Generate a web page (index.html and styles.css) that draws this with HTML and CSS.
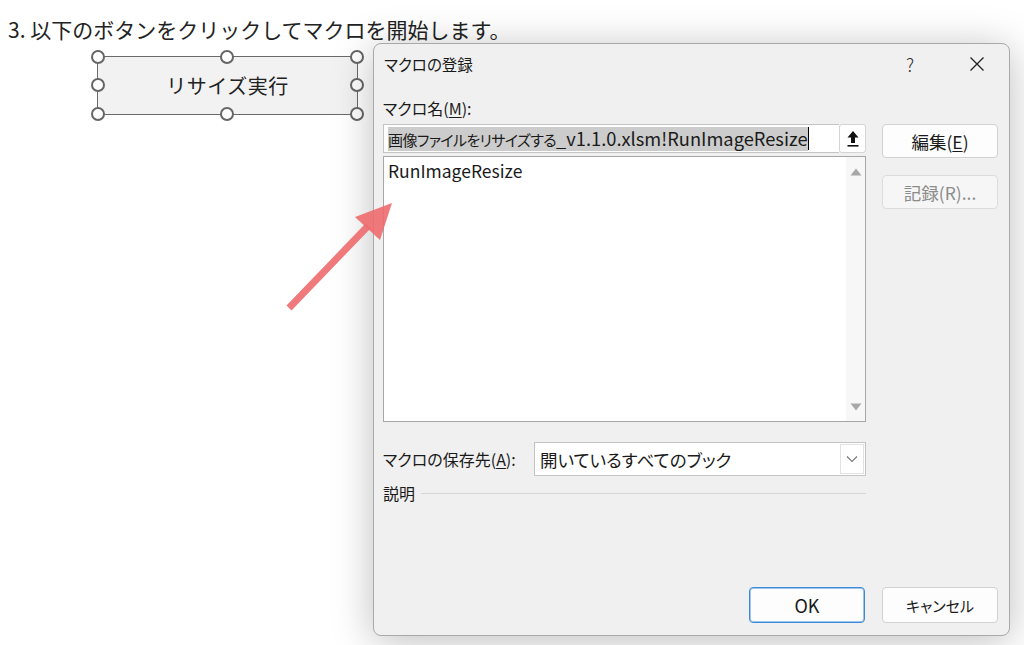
FILE: index.html
```html
<!DOCTYPE html>
<html lang="ja">

<head>
    <meta charset="UTF-8">
    <meta name="viewport" content="width=device-width, initial-scale=1.0">
    <title>マクロの登録</title>
    <link rel="stylesheet" href="styles.css">
</head>

<body>

    <div class="sheet">
        <p class="step">3. 以下のボタンをクリックしてマクロを開始します。</p>

        <!-- 選択中のフォームボタン -->
        <div class="shape">
            <span class="shape-label">リサイズ実行</span>
            <i class="handle h-tl"></i>
            <i class="handle h-tc"></i>
            <i class="handle h-tr"></i>
            <i class="handle h-ml"></i>
            <i class="handle h-mr"></i>
            <i class="handle h-bl"></i>
            <i class="handle h-bc"></i>
            <i class="handle h-br"></i>
        </div>
    </div>

    <div class="dialog">
        <div class="titlebar">
            <span class="title">マクロの登録</span>
            <span class="help">?</span>
            <span class="close">
                <svg width="16" height="16" viewBox="0 0 16 16">
                    <path d="M1.5 1.5 L14.5 14.5 M14.5 1.5 L1.5 14.5" stroke="#222" stroke-width="1.3" fill="none" />
                </svg>
            </span>
        </div>

        <div class="dialog-body">
            <div class="left-col">
                <div class="label">マクロ名(<u>M</u>):</div>

                <div class="name-row">
                    <div class="name-input">
                        <span class="selected"><span class="jp">画像ファイルをリサイズする</span>_v1.1.0.xlsm!RunImageResize</span><span class="caret"></span>
                    </div>
                    <div class="pick-btn">
                        <svg width="14" height="18" viewBox="0 0 14 18">
                            <path d="M7 1 L12.5 7.5 L9 7.5 L9 13 L5 13 L5 7.5 L1.5 7.5 Z" fill="#111" />
                            <rect x="1.5" y="15" width="11" height="1.6" fill="#111" />
                        </svg>
                    </div>
                </div>

                <div class="macro-list">
                    <div class="list-items">
                        <div class="list-item">RunImageResize</div>
                    </div>
                    <div class="scrollbar">
                        <svg width="12" height="8" viewBox="0 0 12 8"><path d="M6 0.5 L11.5 7.5 L0.5 7.5 Z" fill="#a8a8a8" /></svg>
                        <svg width="12" height="8" viewBox="0 0 12 8"><path d="M0.5 0.5 L11.5 0.5 L6 7.5 Z" fill="#a8a8a8" /></svg>
                    </div>
                </div>

                <div class="store-row">
                    <span class="label">マクロの保存先(<u>A</u>):</span>
                    <div class="select">
                        <span class="select-text">開いているすべてのブック</span>
                        <span class="select-btn">
                            <svg width="12" height="8" viewBox="0 0 12 8"><path d="M1 1.5 L6 6.5 L11 1.5" stroke="#777" stroke-width="1.1" fill="none" /></svg>
                        </span>
                    </div>
                </div>

                <div class="desc-row">
                    <span class="label">説明</span>
                    <span class="rule"></span>
                </div>
            </div>

            <div class="right-col">
                <div class="btn wide">編集(<u>E</u>)</div>
                <div class="btn wide disabled">記録(R)...</div>
            </div>
        </div>

        <div class="footer">
            <div class="btn default">OK</div>
            <div class="btn narrow">キャンセル</div>
        </div>
    </div>

    <svg class="pointer" width="1024" height="645" viewBox="0 0 1024 645">
        <line x1="289" y1="308" x2="368" y2="226" stroke="#ee6a6d" stroke-width="7" stroke-opacity="0.9" />
        <path d="M355 217 L392 203 L380 240 Z" fill="#ee6a6d" fill-opacity="0.9" />
    </svg>

</body>

</html>
```

FILE: styles.css
```css
body {
    margin: 0;
    padding: 0;
    background-color: #ffffff;
    font-family: "Noto Sans CJK JP", "Noto Sans", sans-serif;
    color: #1a1a1a;
    width: 1024px;
    height: 645px;
    overflow: hidden;
    position: relative;
}

.sheet {
    padding: 15px 0 0 8px;
}

.step {
    margin: 0;
    font-size: 21px;
    line-height: 29px;
    color: #222;
}

.shape {
    position: relative;
    margin: 12px 0 0 89px;
    width: 259px;
    height: 57px;
    border: 1.5px solid #6a6a6a;
    background-color: #f2f2f2;
    display: flex;
    align-items: center;
    justify-content: center;
}

.shape-label {
    font-size: 20px;
    color: #222;
    letter-spacing: 0.5px;
}

.handle {
    position: absolute;
    width: 10px;
    height: 10px;
    border: 2.2px solid #666;
    border-radius: 50%;
    background-color: #fff;
    margin: -7.2px 0 0 -7.2px;
}

.h-tl { left: 0; top: 0; }
.h-tc { left: 50%; top: 0; }
.h-tr { left: 100%; top: 0; }
.h-ml { left: 0; top: 50%; }
.h-mr { left: 100%; top: 50%; }
.h-bl { left: 0; top: 100%; }
.h-bc { left: 50%; top: 100%; }
.h-br { left: 100%; top: 100%; }

/* ダイアログ */
.dialog {
    position: absolute;
    left: 373px;
    top: 43px;
    width: 637px;
    height: 593px;
    box-sizing: border-box;
    border: 1px solid #a9a9a9;
    border-radius: 8px;
    background-color: #f0f0f0;
    box-shadow: 0 5px 40px rgba(0, 0, 0, 0.26);
    display: flex;
    flex-direction: column;
    font-size: 16px;
    font-feature-settings: "palt";
}

.titlebar {
    height: 40px;
    display: flex;
    align-items: center;
    padding-left: 10px;
}

.title {
    flex: 1;
    font-size: 15.5px;
    color: #1a1a1a;
}

.help {
    font-size: 18px;
    font-weight: 300;
    color: #333;
    width: 20px;
    margin-right: 43px;
}

.close {
    display: flex;
    margin-right: 24px;
}

.dialog-body {
    display: grid;
    grid-template-columns: 483px 116px;
    column-gap: 16px;
    padding: 14px 0 0 9px;
}

.left-col {
    display: flex;
    flex-direction: column;
}

.label {
    line-height: 20px;
    height: 20px;
    white-space: nowrap;
}

u {
    text-underline-offset: 2px;
}

.name-row {
    display: flex;
    margin-top: 6px;
    height: 29px;
}

.name-input {
    flex: 1;
    background-color: #fff;
    border: 1px solid #c4c4c4;
    border-right: none;
    display: flex;
    align-items: center;
    padding-left: 4px;
    overflow: hidden;
    white-space: nowrap;
}

.selected {
    background-color: #cccccc;
    font-size: 18.3px;
    line-height: 23px;
}

.jp {
    font-size: 15px;
    letter-spacing: -0.6px;
}

.caret {
    width: 1px;
    height: 23px;
    background-color: #000;
}

.pick-btn {
    width: 25px;
    background-color: #fff;
    border: 1px solid #d4d4d4;
    border-radius: 3px;
    display: flex;
    align-items: center;
    justify-content: center;
}

.macro-list {
    margin-top: 3px;
    height: 266px;
    box-sizing: border-box;
    border: 1px solid #a6a6a6;
    background-color: #fff;
    display: flex;
}

.list-items {
    flex: 1;
    padding: 2px 0 0 4px;
}

.list-item {
    font-size: 17.5px;
    line-height: 23px;
}

.scrollbar {
    width: 19px;
    background-color: #f7f7f7;
    display: flex;
    flex-direction: column;
    justify-content: space-between;
    align-items: center;
    padding: 11px 0 10px;
}

.store-row {
    margin-top: 20px;
    display: flex;
    align-items: center;
}

.store-row .label {
    flex: 1;
}

.select {
    width: 332px;
    height: 34px;
    box-sizing: border-box;
    border: 1px solid #c4c4c4;
    background-color: #fff;
    display: flex;
    align-items: center;
}

.select-text {
    flex: 1;
    padding-left: 5px;
    font-size: 17.5px;
}

.select-btn {
    width: 24px;
    height: 30px;
    margin-right: 1px;
    border: 1px solid #e2e2e2;
    box-sizing: border-box;
    display: flex;
    align-items: center;
    justify-content: center;
}

.desc-row {
    margin-top: 7px;
    display: flex;
    align-items: center;
    gap: 6px;
}

.rule {
    flex: 1;
    height: 1px;
    background-color: #d6d6d6;
}

.right-col {
    padding-top: 26px;
    display: flex;
    flex-direction: column;
    gap: 17px;
}

.btn {
    width: 116px;
    height: 34px;
    box-sizing: border-box;
    border: 1px solid #d2d2d2;
    border-radius: 4px;
    background-color: #fdfdfd;
    display: flex;
    align-items: center;
    justify-content: center;
    font-size: 16.5px;
    color: #1a1a1a;
}

.btn.wide {
    font-size: 17.5px;
}

.btn.narrow {
    font-size: 15px;
}

.btn.disabled {
    background-color: #f6f6f6;
    color: #8c8c8c;
    border-color: #dcdcdc;
}

.btn.default {
    font-size: 18px;
    border: 1px solid #3d8ad8;
    box-shadow: inset 0 0 0 1px #9cc4ec;
}

.footer {
    margin-top: auto;
    display: flex;
    justify-content: flex-end;
    gap: 17px;
    padding: 0 11px 12px 0;
}

.footer .btn {
    height: 36px;
}

.pointer {
    position: absolute;
    left: 0;
    top: 0;
    pointer-events: none;
}
```
